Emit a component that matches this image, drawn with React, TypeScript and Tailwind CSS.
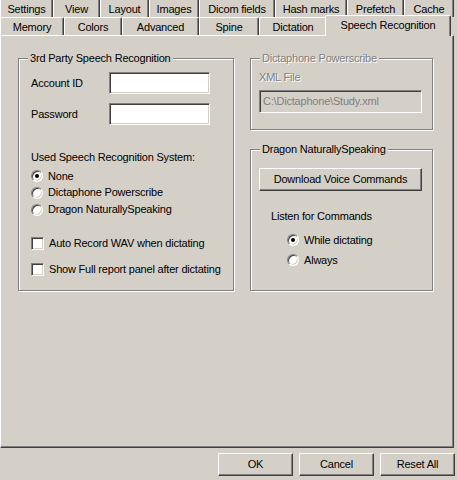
import type { ReactNode } from 'react'

const topTabs = [
  { label: 'Settings', w: 'w-[53px]' },
  { label: 'View', w: 'w-[47px]' },
  { label: 'Layout', w: 'w-[49px]' },
  { label: 'Images', w: 'w-[50px]' },
  { label: 'Dicom fields', w: 'w-[76px]' },
  { label: 'Hash marks', w: 'w-[72px]' },
  { label: 'Prefetch', w: 'w-[57px]' },
  { label: 'Cache', w: 'w-[50px]' },
]

const frontTabs = [
  { label: 'Memory', w: 'w-[64px]' },
  { label: 'Colors', w: 'w-[58px]' },
  { label: 'Advanced', w: 'w-[77px]' },
  { label: 'Spine', w: 'w-[60px]' },
  { label: 'Dictation', w: 'w-[68px]' },
]

// classic win32 bevels
const raised =
  'border border-t-white border-l-white border-b-[#404040] border-r-[#404040] shadow-[inset_-1px_-1px_0_#808080]'
const sunken =
  'border border-t-[#808080] border-l-[#808080] border-b-white border-r-white shadow-[inset_1px_1px_0_#404040,inset_-1px_-1px_0_#d4d0c8]'
const etched = 'border border-[#808080] shadow-[1px_1px_0_#fff,inset_1px_1px_0_#fff]'
const disabledText = 'text-[#808080] [text-shadow:1px_1px_0_#fff]'

function Radio({ checked }: { checked?: boolean }) {
  return (
    <span className={`flex h-[12px] w-[12px] shrink-0 items-center justify-center rounded-full bg-white ${sunken}`}>
      {checked && <span className="h-[4px] w-[4px] rounded-full bg-black" />}
    </span>
  )
}

function Checkbox() {
  return <span className={`h-[13px] w-[13px] shrink-0 bg-white ${sunken}`} />
}

function Group({ title, disabled, className, children }: {
  title: string
  disabled?: boolean
  className: string
  children: ReactNode
}) {
  return (
    <fieldset className={`m-0 min-w-0 p-0 ${etched} ${className}`}>
      <legend className={`ml-[9px] bg-[#d4d0c8] px-[2px] leading-[13px] ${disabled ? disabledText : ''}`}>
        {title}
      </legend>
      {children}
    </fieldset>
  )
}

export default function App() {
  return (
    <div
      className="h-[480px] w-[457px] overflow-hidden bg-[#d4d0c8] text-[11px] leading-[13px] tracking-[-0.2px] text-black"
      style={{ fontFamily: '"Liberation Sans", Arial, sans-serif' }}
    >
      {/* back row of tabs */}
      <div className="flex h-[17px]">
        {topTabs.map(t => (
          <div
            key={t.label}
            className={`${t.w} flex items-center justify-center border-l border-r border-l-white border-r-[#404040] pt-[2px] shadow-[inset_-1px_0_0_#808080]`}
          >
            {t.label}
          </div>
        ))}
      </div>

      {/* front row of tabs */}
      <div className="flex h-[18px]">
        {frontTabs.map(t => (
          <div
            key={t.label}
            className={`${t.w} flex items-center justify-center rounded-t-[2px] border-l border-r border-t border-t-white border-l-white border-r-[#404040] pt-[1px] shadow-[inset_-1px_0_0_#808080]`}
          >
            {t.label}
          </div>
        ))}
        <div className="relative z-10 -ml-[2px] -mt-[2px] flex h-[21px] w-[126px] items-center justify-center rounded-t-[2px] border-l border-r border-t border-t-white border-l-white border-r-[#404040] bg-[#d4d0c8] pb-[2px] shadow-[inset_-1px_0_0_#808080]">
          Speech Recognition
        </div>
      </div>

      {/* tab page */}
      <div className="h-[413px] w-[454px] border border-t-white border-l-white border-b-[#404040] border-r-[#404040] pl-[17px] pt-[16px] shadow-[inset_-1px_-1px_0_#808080]">
        <div className="grid grid-cols-[216px_183px] items-start gap-x-[16px]">
          <Group title="3rd Party Speech Recognition" className="h-[239px]">
            <div className="flex flex-col pl-[12px]">
              <div className="mt-[7px] flex h-[22px] items-center">
                <span className="w-[78px]">Account ID</span>
                <span className={`h-[22px] w-[101px] bg-white ${sunken}`} />
              </div>
              <div className="mt-[9px] flex h-[22px] items-center">
                <span className="w-[78px]">Password</span>
                <span className={`h-[22px] w-[101px] bg-white ${sunken}`} />
              </div>
              <div className="mt-[26px]">Used Speech Recognition System:</div>
              <div className="mt-[4px] flex flex-col">
                <label className="flex h-[16px] items-center gap-[5px]">
                  <Radio checked />
                  None
                </label>
                <label className="flex h-[17px] items-center gap-[5px]">
                  <Radio />
                  Dictaphone Powerscribe
                </label>
                <label className="flex h-[17px] items-center gap-[5px]">
                  <Radio />
                  Dragon NaturallySpeaking
                </label>
              </div>
              <label className="mt-[17px] flex h-[17px] items-center gap-[5px]">
                <Checkbox />
                Auto Record WAV when dictating
              </label>
              <label className="mt-[9px] flex h-[17px] items-center gap-[5px]">
                <Checkbox />
                Show Full report panel after dictating
              </label>
            </div>
          </Group>

          <div className="flex flex-col">
            <Group title="Dictaphone Powerscribe" disabled className="h-[78px]">
              <div className="flex flex-col pl-[8px]">
                <div className={`mt-[6px] ${disabledText}`}>XML File</div>
                <div className={`mt-[6px] flex h-[23px] w-[163px] items-center px-[3px] ${sunken}`}>
                  <span className="text-[#808080]">C:\Dictaphone\Study.xml</span>
                </div>
              </div>
            </Group>

            <Group title="Dragon NaturallySpeaking" className="mt-[13px] h-[148px]">
              <div className="flex flex-col pl-[8px]">
                <button className={`mt-[12px] h-[23px] w-[163px] bg-[#d4d0c8] ${raised}`}>
                  Download Voice Commands
                </button>
                <div className="ml-[12px] mt-[19px]">Listen for Commands</div>
                <div className="ml-[28px] mt-[7px] flex flex-col">
                  <label className="flex h-[20px] items-center gap-[5px]">
                    <Radio checked />
                    While dictating
                  </label>
                  <label className="flex h-[20px] items-center gap-[5px]">
                    <Radio />
                    Always
                  </label>
                </div>
              </div>
            </Group>
          </div>
        </div>
      </div>

      {/* dialog buttons */}
      <div className="mt-[5px] flex justify-end gap-[6px] pr-[2px]">
        {['OK', 'Cancel', 'Reset All'].map(b => (
          <button key={b} className={`h-[23px] w-[75px] bg-[#d4d0c8] ${raised}`}>
            {b}
          </button>
        ))}
      </div>
    </div>
  )
}
